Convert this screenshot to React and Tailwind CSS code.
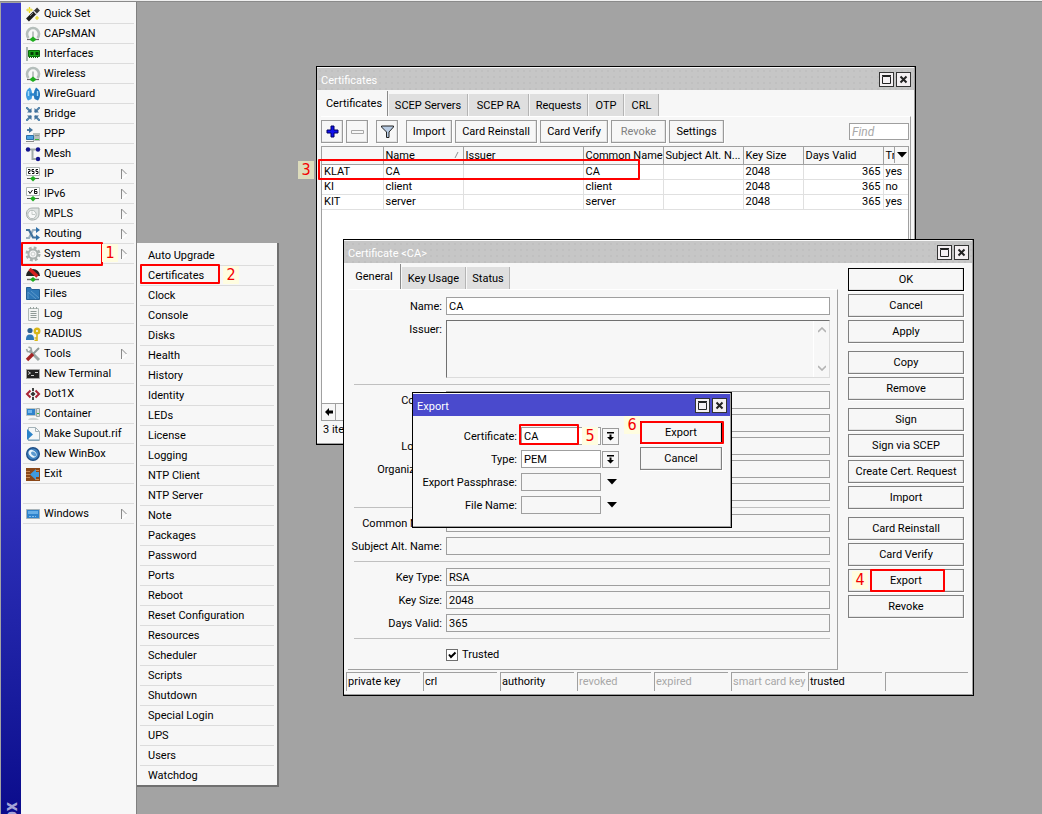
import React from "react";

const ICONS = {
  wand: (
    <>
      <path d="M2.500 14 10.500 6" stroke="#1c1c1c" strokeWidth="4" />
      <path d="M10 6.500l3.500-3.500" stroke="#3a3a3a" strokeWidth="4" />
      <path d="M8.500 5l3 3" stroke="#e4e4e4" strokeWidth="1.200" />
      <path d="M5 10l3-3" stroke="#8a8a8a" strokeWidth="1" />
      <path d="M4.500 1v6M1.500 4h6" stroke="#e8d820" strokeWidth="1.300" />
      <path d="M2.500 2l4 4M6.500 2l-4 4" stroke="#f2ea80" strokeWidth="1" />
      <path d="M12 10v4M10 12h4" stroke="#e8d820" strokeWidth="1.200" />
    </>
  ),
  antenna: (
    <>
      <path d="M3.500 12A6 6 0 1 1 12.500 12" fill="none" stroke="#b4bebb" strokeWidth="2.600" />
      <path d="M8 5.500V12" stroke="#a4aeab" strokeWidth="1.400" />
      <path d="M2 13.500h12" stroke="#666" strokeWidth="1.200" />
      <path d="M5 13 8 10.500 11 13v1l-3 2-3-2z" fill="#1fae1f" />
    </>
  ),
  card: (
    <>
      <path d="M2 1v14" stroke="#aab5b2" strokeWidth="2" />
      <path d="M3.500 4.500h11v6h-11z" fill="#1ca81c" stroke="#0b6b0b" />
      <path d="M5.500 6h3v3h-3zM10.500 6h3v3h-3z" fill="#053d05" />
      <path d="M4 11.500h10" stroke="#0b6b0b" strokeDasharray="1 1" />
    </>
  ),
  guard: (
    <>
      <path d="M5 1.500C0 4 0 11 3 14.500l3.500-1.500 1-4.500-1-4z" fill="#3c9be0" />
      <path d="M11 1.500c5 2.500 5 9.500 2 13L9.500 13l-1-4.500 1-4z" fill="#2477bd" />
      <path d="M5 8.500h6" stroke="#2b83c9" strokeWidth="2.400" />
      <path d="M3.500 5v5M12.500 5v5" stroke="#a9dcf7" strokeWidth="1.400" />
      <path d="M8 1v4.500M8 11.500V15" stroke="#f7f7f7" strokeWidth="1.400" />
    </>
  ),
  bridge: (
    <>
      <path d="M2 2l4 4M14 2l-4 4M2 14l4-4M14 14l-4-4" stroke="#4d7ca4" strokeWidth="2" />
      <path d="M6.500 2v4.500H2zM9.500 2v4.500H14zM6.500 14V9.500H2zM9.500 14V9.500H14z" fill="#41719b" />
      <path d="M1 1h2v2H1zM13 1h2v2h-2zM1 13h2v2H1zM13 13h2v2h-2z" fill="#5c8ab0" />
    </>
  ),
  ppp: (
    <>
      <path d="M2 4h3" stroke="#4d7ca4" strokeWidth="2" />
      <path d="M4 1l4 3-4 3z" fill="#41719b" />
      <path d="M8 7h7v8H8z" fill="#b6bfbd" />
      <path d="M10 9.500h4" stroke="#8a9391" />
      <path d="M10 13.500h4" stroke="#39b539" />
      <path d="M1.500 9.500h7v4h-7z" fill="#4da3e2" stroke="#2d6ea5" />
      <path d="M1 15.500h8" stroke="#888" />
    </>
  ),
  mesh: (
    <>
      <path d="M3 3.500h10M7.500 4v9H13" fill="none" stroke="#a0aaa8" strokeWidth="2" />
      <circle cx="3" cy="3.500" r="2.200" fill="#14148c" />
      <circle cx="13" cy="3.500" r="2.200" fill="#14148c" />
      <circle cx="13" cy="13" r="2.200" fill="#14148c" />
    </>
  ),
  ip: (
    <>
      <path d="M1.500 1.500h13v8h-13z" fill="#fff" stroke="#aeb6b4" />
      <path d="M3 3.500h2v2H3.500v2H5.500M9 3.500H7v2h2v2H7M13 3.500h-2v2h2v2h-2" fill="none" stroke="#111" />
      <path d="M2 12.500h12" stroke="#555" />
      <path d="M5 12.500l3-2.500 3 2.500L8 15.500z" fill="#1fae1f" />
    </>
  ),
  ipv6: (
    <>
      <path d="M1.500 1.500h13v8h-13z" fill="#fff" stroke="#aeb6b4" />
      <path d="M3.500 5l1.500 2.500L7.500 4M12 3.500H9.500v4H12v-2H9.500" fill="none" stroke="#111" />
      <path d="M2 12.500h12" stroke="#555" />
      <path d="M5 12.500l3-2.500 3 2.500L8 15.500z" fill="#1fae1f" />
    </>
  ),
  mpls: (
    <>
      <path d="M1.500 7C2 3 5 2 8 2h6v6c0 3-2 6-7 6-3 0-6-3-5.500-7z" fill="#dfe3e2" stroke="#a4acaa" />
      <circle cx="7" cy="8.500" r="4.200" fill="#f7f8f8" stroke="#b2bab8" />
      <path d="M7 5.500v3h3" fill="none" stroke="#c4cac8" />
    </>
  ),
  routing: (
    <>
      <path d="M1 12h3l4-8h4" fill="none" stroke="#9cb0c0" strokeWidth="2.200" />
      <path d="M1 4h3l4 7.500h4" fill="none" stroke="#41719b" strokeWidth="2.200" />
      <path d="M11 1l4 3-4 3zM11 8.500l4 3-4 3z" fill="#2f6fa8" />
    </>
  ),
  gear: (
    <>
      <circle cx="8" cy="8" r="6" fill="none" stroke="#a9b1af" strokeWidth="3" strokeDasharray="2.700 2" />
      <circle cx="8" cy="8" r="4.500" fill="#f7f7f7" stroke="#a9b1af" strokeWidth="2" />
      <circle cx="8" cy="8" r="2" fill="none" stroke="#c9cecd" />
    </>
  ),
  queues: (
    <>
      <path d="M1 10a7 7 0 0 1 14 0z" fill="#222" />
      <path d="M4.500 3l8 7.500" stroke="#d42020" strokeWidth="3.400" />
      <path d="M2 13.500h12" stroke="#666" strokeWidth="1.400" />
      <path d="M5 13.500 8 11l3 2.500L8 16z" fill="#1fae1f" />
    </>
  ),
  files: (
    <>
      <path d="M1.500 1.500h4l1 2h8v10h-13z" fill="#2f78b7" stroke="#235f95" />
      <path d="M3 13V6l8 7M6 5l8 7" fill="none" stroke="#5b98cb" />
    </>
  ),
  log: (
    <>
      <path d="M3.500 2.500h10v12h-10z" fill="#f3f5f4" stroke="#b1bab7" />
      <path d="M5.500 5.500h6M5.500 7.500h6M5.500 9.500h6M5.500 11.500h6" stroke="#8f9a97" />
      <path d="M5.500 1v2M8.500 1v2M11.500 1v2" stroke="#98a29f" />
    </>
  ),
  radius: (
    <>
      <circle cx="5" cy="4.500" r="2.600" fill="#2c5f8f" />
      <path d="M1 14c0-4 1-5.500 4-5.500S9 10 9 14z" fill="#2f78b7" />
      <circle cx="12" cy="5" r="2.300" fill="none" stroke="#d8b617" strokeWidth="2.400" />
      <path d="M12 7.500V15M12 12h-2.500M12 14.200h-2.500" stroke="#d8b617" strokeWidth="1.600" />
    </>
  ),
  tools: (
    <>
      <path d="M4.500 4.500l9.500 9.500" stroke="#9aa5a2" strokeWidth="3" />
      <path d="M1.500 3l1 2.500 2.500.500 1.500-1.500L6 2 3.500 1" stroke="#9aa5a2" strokeWidth="1.600" fill="none" />
      <path d="M14 2 8 8" stroke="#8d9896" strokeWidth="2" />
      <path d="M8 8l-6 6" stroke="#a32424" strokeWidth="3.400" />
    </>
  ),
  terminal: (
    <>
      <path d="M1.500 3.500h13v9h-13z" fill="#222" stroke="#a4a4a4" />
      <path d="M3 5.500l2.500 1.500L3 8.500M6 9.500h3M10 6.500h3" fill="none" stroke="#ccc" />
    </>
  ),
  dot: (
    <>
      <path d="M5.500 4.500 2 8l3.500 3.500M10.500 4.500 14 8l-3.500 3.500" fill="none" stroke="#a82435" strokeWidth="2" />
      <path d="M8 2v3M8 11v3" stroke="#444" strokeWidth="2" />
      <path d="M8 5.500 10.500 8 8 10.500 5.500 8z" fill="#333" />
    </>
  ),
  container: (
    <>
      <path d="M1.500 2.500h9v7h-9z" fill="#2f83cc" stroke="#bcc4c2" />
      <path d="M3 4h4v3H3z" fill="#73b7ec" />
      <path d="M11.500 2.500h3v8h-3z" fill="#dde0df" stroke="#9da6a4" />
      <path d="M12 7.500h2" stroke="#39b539" />
      <path d="M3 14c1-3 9-3 11 0z" fill="#d0d5d3" />
    </>
  ),
  supout: (
    <>
      <path d="M3.500 1.500h7l4 4v9h-11z" fill="#f4f7f8" stroke="#a4b2b8" />
      <path d="M10.500 1.500v4h4" fill="none" stroke="#a4b2b8" />
      <path d="M2 3l6 5.500L2 14z" fill="#2b83c9" />
      <path d="M3 14h11" stroke="#6b99b8" />
    </>
  ),
  winbox: (
    <>
      <circle cx="8" cy="8" r="6.300" fill="#3f82c0" stroke="#1f5088" strokeWidth="1.400" />
      <ellipse cx="7.500" cy="8" rx="4.400" ry="3.200" fill="#e9f4fb" transform="rotate(40 8 8)" />
      <ellipse cx="8.500" cy="7.500" rx="3" ry="1.800" fill="#5b9ad0" transform="rotate(40 8 8)" />
    </>
  ),
  exit: (
    <>
      <path d="M1 2h14v13H1z" fill="#8a4718" />
      <path d="M1 5.500h4M1 8.500h4M1 11.500h4M10 4.500h4M10 13.500h4" stroke="#c98a52" />
      <path d="M5 8.500 11 3v3h3v5h-3v3z" fill="#3d9be0" />
    </>
  ),
  windows: (
    <>
      <path d="M1.500 3.500h13v9h-13z" fill="#2f83cc" stroke="#a8b3b8" />
      <path d="M3 5h10v3H3z" fill="#67aee6" />
      <path d="M4 10.500h7" stroke="#84c0ee" strokeDasharray="2 1" />
    </>
  ),
};

const NAV = [
  ["Quick Set", "wand"],
  ["CAPsMAN", "antenna"],
  ["Interfaces", "card"],
  ["Wireless", "antenna"],
  ["WireGuard", "guard"],
  ["Bridge", "bridge"],
  ["PPP", "ppp"],
  ["Mesh", "mesh"],
  ["IP", "ip", true],
  ["IPv6", "ipv6", true],
  ["MPLS", "mpls", true],
  ["Routing", "routing", true],
  ["System", "gear", true],
  ["Queues", "queues"],
  ["Files", "files"],
  ["Log", "log"],
  ["RADIUS", "radius"],
  ["Tools", "tools", true],
  ["New Terminal", "terminal"],
  ["Dot1X", "dot"],
  ["Container", "container"],
  ["Make Supout.rif", "supout"],
  ["New WinBox", "winbox"],
  ["Exit", "exit"],
  null,
  ["Windows", "windows", true],
];

const SYSTEM_MENU = [
  "Auto Upgrade", "Certificates", "Clock", "Console", "Disks", "Health", "History",
  "Identity", "LEDs", "License", "Logging", "NTP Client", "NTP Server", "Note",
  "Packages", "Password", "Ports", "Reboot", "Reset Configuration", "Resources",
  "Scheduler", "Scripts", "Shutdown", "Special Login", "UPS", "Users", "Watchdog",
];

function Num({ children, className }) {
  return (
    <span
      className={`pointer-events-none absolute z-10 flex h-[18px] w-4 items-center justify-center font-['DejaVu_Sans_Condensed','DejaVu_Sans',sans-serif] text-[16px] leading-[18px] text-[#f40000] ${className}`}
    >
      {children}
    </span>
  );
}

function Mark({ className }) {
  return <span className={`pointer-events-none absolute z-10 rounded-[1px] border-2 border-[#ff0000] ${className}`} />;
}

function NavItem({ item }) {
  if (!item) return <li className="mx-0.5 h-5 border-b border-[#dcdcdc]" />;
  const [label, icon, sub] = item;
  const active = label === "System";
  return (
    <li className="relative">
      <button
        type="button"
        className="mx-0.5 flex h-5 w-[calc(100%-4px)] items-center border-b border-[#dcdcdc] pl-0.5 pr-1.5 text-left"
      >
        <svg viewBox="0 0 16 16" className="mr-[3px] h-4 w-4 shrink-0">{ICONS[icon]}</svg>
        <span className="grow whitespace-nowrap">{label}</span>
        {sub && (
          <svg viewBox="0 0 8 12" className="h-3 w-2 shrink-0">
            <path d="M1.500 11 7 6.500" fill="none" stroke="#fff" strokeWidth="1.500" />
            <path d="M1.500 11V1L6.500 6" fill="none" stroke="#8a8a8a" />
          </svg>
        )}
      </button>
      {active && (
        <>
          <Mark className="-top-0.5 left-0 h-6 w-[82px]" />
          <Num className="left-[81px] top-0 bg-[#fffde0]">1</Num>
        </>
      )}
    </li>
  );
}

function Caption({ title, active }) {
  return (
    <header
      className={`flex h-[22px] items-center gap-0.5 pl-1 pr-[3px] ${
        active
          ? "bg-[#4a4acd] text-white"
          : "bg-[#c6c6c6] bg-[radial-gradient(#c0c0c0_1px,transparent_1px)] bg-[length:6px_6px] text-white"
      }`}
    >
      <h2 className="grow pt-0.5">{title}</h2>
      <button type="button" aria-label="Maximize" className="flex h-[15px] w-[15px] items-center justify-center border border-[#333] bg-[#f4f0f2]">
        <svg viewBox="0 0 11 11" className="h-[11px] w-[11px]"><path d="M1.500 2.500h8v7h-8zM1 1.500h9" fill="none" stroke="#222" /></svg>
      </button>
      <button type="button" aria-label="Close" className="flex h-[15px] w-[15px] items-center justify-center border border-[#333] bg-[#f4f0f2]">
        <svg viewBox="0 0 11 11" className="h-[11px] w-[11px]"><path d="M2.500 2.500l6 6M8.500 2.500l-6 6" stroke="#222" strokeWidth="2" /></svg>
      </button>
    </header>
  );
}

function Frame({ title, active, className, children }) {
  return (
    <section className={`absolute flex flex-col border border-black bg-[#f7f7f7] ${className}`}>
      <div className="flex grow flex-col border-b border-r border-[#a0a0a0] pt-px">
        <Caption title={title} active={active} />
        {children}
      </div>
    </section>
  );
}

function Tabs({ items }) {
  return (
    <div role="tablist" className="flex h-[26px] items-end">
      {items.map(([label, width], i) => (
        <button
          key={label}
          type="button"
          role="tab"
          aria-selected={i === 0}
          className={`mr-px whitespace-nowrap border-r text-center ${width} ${
            i === 0 ? "h-[25px] border-[#8a8a8a] bg-[#f7f7f7]" : "h-[22px] border-[#b4b4b4] bg-[#dfdfdf]"
          }`}
        >
          {label}
        </button>
      ))}
    </div>
  );
}

function Btn({ className, children, ...rest }) {
  return (
    <button
      type="button"
      className={`flex h-[23px] items-center justify-center whitespace-nowrap border shadow-[inset_-1px_-1px_0_#e4e4e4,1px_1px_0_#fff] ${className}`}
      {...rest}
    >
      {children}
    </button>
  );
}

const SIDE = [
  ["OK", "Cancel", "Apply"],
  ["Copy", "Remove"],
  ["Sign", "Sign via SCEP", "Create Cert. Request", "Import"],
  ["Card Reinstall", "Card Verify", "Export", "Revoke"],
];

function Field({ label, value = "", editable }) {
  const id = "f-" + label.replace(/\W/g, "");
  return (
    <div className="flex items-center">
      <label htmlFor={id} className="flex w-[92px] shrink-0 justify-end whitespace-nowrap pr-1">{label}:</label>
      <input
        id={id}
        defaultValue={value}
        readOnly={!editable}
        className={`h-[18px] min-w-0 grow border border-[#9f9f9f] px-0.5 outline-none ${editable ? "bg-white" : "bg-[#f7f7f7]"}`}
      />
    </div>
  );
}

function Rule() {
  return (
    <div className="py-px">
      <hr className="border-t border-[#c0c0c0]" />
    </div>
  );
}

function CertificatesWindow() {
  const rows = [
    ["KLAT", "CA", "", "CA", "", "2048", "365", "yes"],
    ["KI", "client", "", "client", "", "2048", "365", "no"],
    ["KIT", "server", "", "server", "", "2048", "365", "yes"],
  ];
  const heads = ["", "Name", "Issuer", "Common Name", "Subject Alt. N...", "Key Size", "Days Valid", "Tr"];
  return (
    <Frame title="Certificates" className="left-[179px] top-[66px] h-[379px] w-[600px]">
      <div className="flex grow flex-col pl-1 pr-[3px]">
        <Tabs
          items={[
            ["Certificates", "w-[67px]"],
            ["SCEP Servers", "w-[79px]"],
            ["SCEP RA", "w-[60px]"],
            ["Requests", "w-[58px]"],
            ["OTP", "w-[35px]"],
            ["CRL", "w-[34px]"],
          ]}
        />
        <div className="flex grow flex-col border-r border-t border-r-[#a0a0a0] border-t-white pr-px">
          <div className="flex items-center gap-[3px] py-[3px]">
            <Btn aria-label="Add" className="w-[22px] border-[#9a9a9a]">
              <svg viewBox="0 0 13 13" className="h-[13px] w-[13px]"><path d="M5 1h3v4h4v3H8v4H5V8H1V5h4z" fill="#1010ee" stroke="#000060" /></svg>
            </Btn>
            <Btn aria-label="Remove" className="w-[22px] border-[#9a9a9a]">
              <svg viewBox="0 0 13 13" className="h-[13px] w-[13px]"><path d="M.5 5.500h12v3H.5z" fill="#f7f7f7" stroke="#a8a8a8" /></svg>
            </Btn>
            <Btn aria-label="Filter" className="ml-[5px] w-[22px] border-[#9a9a9a]">
              <svg viewBox="0 0 13 13" className="h-[13px] w-[13px]"><path d="M.5 1h12v1L8 7v5.500H5.500V7L.5 2z" fill="#b8cce4" stroke="#222" /></svg>
            </Btn>
            <Btn className="ml-[5px] w-[46px] border-[#9a9a9a]">Import</Btn>
            <Btn className="w-[82px] border-[#9a9a9a]">Card Reinstall</Btn>
            <Btn className="w-[68px] border-[#9a9a9a]">Card Verify</Btn>
            <Btn className="w-[55px] border-[#9a9a9a] text-[#808080]">Revoke</Btn>
            <Btn className="w-[55px] border-[#9a9a9a]">Settings</Btn>
            <input aria-label="Find" placeholder="Find" className="ml-auto h-[17px] w-[60px] border border-[#9f9f9f] bg-white px-0.5 text-[12px] italic outline-none placeholder:text-[#a8a8a8]" />
          </div>
          <div className="relative grow border border-[#a0a0a0] bg-white">
            <table className="w-full table-fixed border-collapse">
              <colgroup>
                <col className="w-[61px]" />
                <col className="w-20" />
                <col className="w-[120px]" />
                <col className="w-20" />
                <col className="w-20" />
                <col className="w-[60px]" />
                <col className="w-20" />
                <col />
              </colgroup>
              <thead>
                <tr className="h-[17px] bg-[#f7f7f7]">
                  {heads.map((h, i) => (
                    <th key={i} className="overflow-hidden whitespace-nowrap border-b border-r border-[#a0a0a0] p-0 pl-0.5 text-left font-normal last:border-r-0">
                      <span className="flex items-center justify-between">
                        {h}
                        {i === 1 && <svg viewBox="0 0 8 8" className="mr-0.5 h-2 w-2"><path d="M2 7l3-6" fill="none" stroke="#909090" /></svg>}
                      </span>
                    </th>
                  ))}
                </tr>
              </thead>
              <tbody>
                {rows.map((r) => (
                  <tr key={r[0]} className="h-[15px]">
                    {r.map((c, i) => (
                      <td key={i} className={`h-[15px] border-b border-r border-[#e0e0e0] p-0 leading-[14px] last:border-r-0 ${i === 6 ? "pr-0.5 text-right" : "pl-0.5"}`}>
                        {c}
                      </td>
                    ))}
                  </tr>
                ))}
              </tbody>
            </table>
            <button type="button" aria-label="Columns" className="absolute right-0 top-0 flex h-4 w-[14px] items-center justify-center border-l border-[#a0a0a0] bg-[#f7f7f7]">
              <svg viewBox="0 0 10 6" className="h-1.5 w-2.5"><path d="M0 0h10L5 5.500z" /></svg>
            </button>
            <Mark className="-left-[4px] top-3 h-[21px] w-[322px]" />
          </div>
          <div className="flex h-[17px] border border-t-0 border-[#a0a0a0]">
            <button type="button" aria-label="Scroll left" className="flex w-[14px] items-center justify-center border-r border-[#a0a0a0]">
              <svg viewBox="0 0 8 8" className="h-2 w-2"><path d="M0 4l4-4v2.500h4v3H4V8z" /></svg>
            </button>
          </div>
          <p className="h-[22px] pl-0.5 leading-[18px]">3 items</p>
        </div>
      </div>
      <Num className="-left-[19px] top-[94px] bg-[#dddcbc]">3</Num>
    </Frame>
  );
}

function CertificateWindow() {
  const status = ["private key", "crl", "authority", "revoked", "expired", "smart card key", "trusted", ""];
  return (
    <Frame title="Certificate <CA>" className="left-[206px] top-[239px] h-[457px] w-[631px]">
      <div className="flex grow">
        <div className="flex grow flex-col pl-1">
          <Tabs items={[["General", "w-[53px]"], ["Key Usage", "w-[64px]"], ["Status", "w-[43px]"]]} />
          <div className="flex grow flex-col gap-[5px] border-b border-r border-t border-b-[#a0a0a0] border-r-[#a0a0a0] border-t-white pl-1.5 pr-[7px] pt-[7px]">
            <Field label="Name" value="CA" editable />
            <div className="flex">
              <label htmlFor="issuer" className="w-[92px] shrink-0 pr-1 pt-0.5 text-right">Issuer:</label>
              <div className="flex h-[58px] grow border border-[#dcdcdc] border-l-[#707070] border-t-[#707070]">
                <textarea id="issuer" readOnly className="min-w-0 grow resize-none bg-transparent outline-none" />
                <div className="flex w-4 flex-col items-center justify-between border-l border-white py-1.5 text-[#b4b4b4]">
                  <svg viewBox="0 0 8 6" className="h-1.5 w-2"><path d="M0 5l4-4 4 4" fill="none" stroke="currentColor" strokeWidth="1.600" /></svg>
                  <svg viewBox="0 0 8 6" className="h-1.5 w-2"><path d="M0 1l4 4 4-4" fill="none" stroke="currentColor" strokeWidth="1.600" /></svg>
                </div>
              </div>
            </div>
            <Rule />
            <Field label="Country" />
            <Field label="State" />
            <Field label="Locality" />
            <Field label="Organization" />
            <Field label="Unit" />
            <Rule />
            <Field label="Common Name" />
            <Field label="Subject Alt. Name" />
            <Rule />
            <Field label="Key Type" value="RSA" />
            <Field label="Key Size" value="2048" />
            <Field label="Days Valid" value="365" />
            <Rule />
            <label className="flex items-center gap-1 pl-[92px] pt-0.5">
              <span className="relative flex h-3 w-3">
                <input type="checkbox" defaultChecked className="peer h-3 w-3 appearance-none border border-[#707070] bg-white" />
                <svg viewBox="0 0 12 12" className="pointer-events-none absolute left-0 top-0 hidden h-3 w-3 peer-checked:block"><path d="M3 5.500l2 2.500 4.500-4.500" fill="none" stroke="#000" strokeWidth="2" /></svg>
              </span>
              Trusted
            </label>
          </div>
        </div>
        <div className="flex w-[134px] shrink-0 flex-col gap-2 pl-[10px] pr-2 pt-[5px]">
          {SIDE.map((group, g) => (
            <div key={g} className="flex flex-col gap-[3px]">
              {group.map((b) => (
                <div key={b} className="relative">
                  <Btn className={`w-full ${b === "OK" ? "border-black" : "border-[#808080]"}`}>{b}</Btn>
                  {b === "Export" && (
                    <>
                      <Num className="left-1 top-0.5 bg-[#fffde0]">4</Num>
                      <Mark className="left-[22px] top-0 h-[23px] w-[75px]" />
                    </>
                  )}
                </div>
              ))}
            </div>
          ))}
        </div>
      </div>
      <footer className="mt-0.5 flex h-[22px] gap-[3px] pb-[3px] pl-0.5 pr-1">
        {status.map((s, i) => (
          <span
            key={i}
            className={`w-[74px] shrink-0 whitespace-nowrap border-l border-t border-[#a0a0a0] pl-px leading-[18px] last:w-auto last:shrink last:grow ${i > 2 && i < 6 ? "text-[#a8a8a8]" : ""}`}
          >
            {s}
          </span>
        ))}
      </footer>
    </Frame>
  );
}

function ExportRow({ label, options, children }) {
  const id = "x-" + label.replace(/\W/g, "");
  return (
    <div className="relative flex items-center">
      <label htmlFor={id} className="w-[108px] shrink-0 whitespace-nowrap pr-1 text-right">{label}:</label>
      {options ? (
        <>
          <select id={id} className="h-[18px] w-20 appearance-none border border-[#9f9f9f] bg-white px-0.5 outline-none">
            {options.map((o) => <option key={o}>{o}</option>)}
          </select>
          <button type="button" aria-label={`${label} list`} className="ml-px flex h-[17px] w-[17px] items-center justify-center border border-[#9a9a9a]">
            <svg viewBox="0 0 9 9" className="h-[9px] w-[9px]"><path d="M1 0h7v1.500H1zM3.500 2.500h2V5H8L4.500 8.500 1 5h2.500z" /></svg>
          </button>
        </>
      ) : (
        <>
          <input id={id} className="h-[18px] w-20 border border-[#9f9f9f] bg-[#f7f7f7] px-0.5 outline-none" />
          <button type="button" aria-label={`Show ${label}`} className="ml-px flex h-[17px] w-[19px] items-center justify-center">
            <svg viewBox="0 0 10 6" className="h-1.5 w-2.5"><path d="M0 0h10L5 5.500z" /></svg>
          </button>
        </>
      )}
      {children}
    </div>
  );
}

function ExportDialog() {
  return (
    <Frame title="Export" active className="left-[275px] top-[392px] h-[136px] w-[320px]">
      <div className="flex grow justify-between pr-2">
        <div className="flex flex-col gap-[5px] pt-[11px]">
          <ExportRow label="Certificate" options={["CA"]}>
            <Mark className="-top-[3px] left-[106px] h-[21px] w-[60px]" />
            <Num className="left-[169px] top-0 bg-[#fffde0]">5</Num>
          </ExportRow>
          <ExportRow label="Type" options={["PEM"]} />
          <ExportRow label="Export Passphrase" />
          <ExportRow label="File Name" />
        </div>
        <div className="flex flex-col gap-[3px] pt-[5px]">
          <div className="relative">
            <Btn className="w-[82px] border-black">Export</Btn>
            <Mark className="left-0 top-0 h-[23px] w-[84px]" />
            <Num className="-left-4 -top-[5px] bg-[#fffde0]">6</Num>
          </div>
          <Btn className="w-[82px] border-[#808080]">Cancel</Btn>
        </div>
      </div>
    </Frame>
  );
}

export default function App() {
  return (
    <div className="flex h-screen flex-col overflow-hidden bg-[#a3a3a3] font-[Roboto,'Liberation_Sans',sans-serif] text-[11px] leading-[15px] text-black">
      <div className="h-0.5 shrink-0 border-b border-[#8a8a8a] bg-[#f0f0f0]" />
      <div className="flex min-h-0 grow">
        <aside className="relative ml-px mt-px w-5 shrink-0 overflow-hidden bg-linear-to-b from-[#3a3aca] from-50% to-[#0b0b8c]">
          <span className="absolute -bottom-[7px] left-0 w-5 rotate-180 whitespace-nowrap text-[18px] font-bold leading-5 text-[#a4a4d8] [writing-mode:vertical-rl]">
            ox
          </span>
        </aside>
        <nav className="w-[116px] shrink-0 border-r border-[#808080] bg-[#f7f7f7] pt-0.5">
          <ul>
            {NAV.map((item, i) => <NavItem key={i} item={item} />)}
          </ul>
        </nav>
        <main className="relative -mt-0.5 grow">
          <ul className="absolute left-0 top-[243px] w-[142px] border-b-2 border-r-2 border-[#707070] bg-[#f7f7f7] px-[3px] pt-[3px]">
            {SYSTEM_MENU.map((m) => (
              <li key={m} className="relative border-b border-[#dcdcdc] last:border-b-0">
                <button type="button" className="block h-[19px] w-full whitespace-nowrap pl-2 text-left">{m}</button>
                {m === "Certificates" && (
                  <>
                    <Mark className="-top-0.5 left-0 h-5 w-20" />
                    <Num className="left-[83px] top-0 bg-[#fffde0]">2</Num>
                  </>
                )}
              </li>
            ))}
          </ul>
          <CertificatesWindow />
          <CertificateWindow />
          <ExportDialog />
        </main>
      </div>
    </div>
  );
}
